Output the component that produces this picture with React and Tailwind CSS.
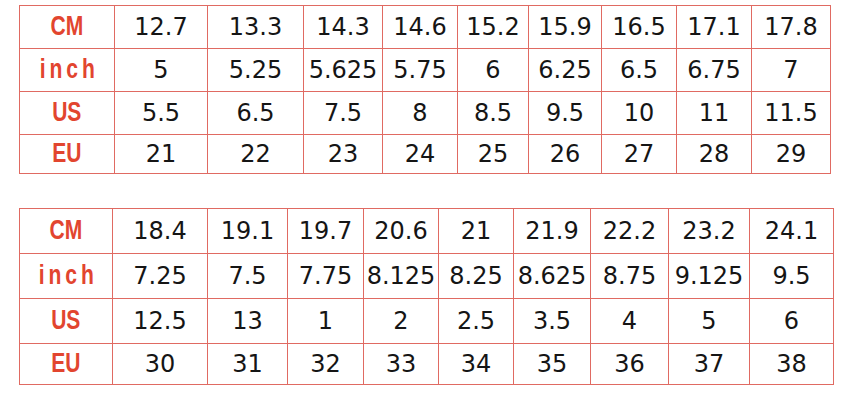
const labels = ["CM", "inch", "US", "EU"];

const tables = [
  {
    width: "w-[811px]",
    cols: [95, 93, 96, 79, 75, 71, 73, 75, 75, 79],
    rows: [43, 43, 43, 39],
    data: [
      ["12.7", "13.3", "14.3", "14.6", "15.2", "15.9", "16.5", "17.1", "17.8"],
      ["5", "5.25", "5.625", "5.75", "6", "6.25", "6.5", "6.75", "7"],
      ["5.5", "6.5", "7.5", "8", "8.5", "9.5", "10", "11", "11.5"],
      ["21", "22", "23", "24", "25", "26", "27", "28", "29"],
    ],
  },
  {
    width: "w-[814px]",
    cols: [93, 95, 80, 76, 75, 75, 77, 78, 81, 84],
    rows: [45, 45, 45, 41],
    data: [
      ["18.4", "19.1", "19.7", "20.6", "21", "21.9", "22.2", "23.2", "24.1"],
      ["7.25", "7.5", "7.75", "8.125", "8.25", "8.625", "8.75", "9.125", "9.5"],
      ["12.5", "13", "1", "2", "2.5", "3.5", "4", "5", "6"],
      ["30", "31", "32", "33", "34", "35", "36", "37", "38"],
    ],
  },
];

function SizeTable({ width, cols, rows, data }) {
  return (
    <table className={`border-collapse table-fixed ${width}`}>
      <colgroup>
        {cols.map((w, i) => (
          <col key={i} style={{ width: w }} />
        ))}
      </colgroup>
      <tbody>
        {data.map((row, r) => (
          <tr key={r} style={{ height: rows[r] }}>
            <td className="border border-[#e06a62] p-0 text-center align-middle">
              <span
                className={`inline-block scale-x-[0.78] text-[27px] font-bold leading-none text-[#e2452f] font-['Liberation_Sans',Arial,sans-serif] ${
                  r === 1 ? "tracking-[5px] pl-[5px]" : ""
                }`}
              >
                {labels[r]}
              </span>
            </td>
            {row.map((v, c) => (
              <td
                key={c}
                className="border border-[#e06a62] p-0 text-center align-middle text-[24px] leading-none text-[#151515] font-['DejaVu_Sans',Verdana,sans-serif]"
              >
                {v}
              </td>
            ))}
          </tr>
        ))}
      </tbody>
    </table>
  );
}

export default function App() {
  return (
    <div className="w-[850px] h-[419px] bg-white overflow-hidden flex flex-col gap-[34px] pt-[5px] pl-[19px]">
      {tables.map((t, i) => (
        <SizeTable key={i} {...t} />
      ))}
    </div>
  );
}
